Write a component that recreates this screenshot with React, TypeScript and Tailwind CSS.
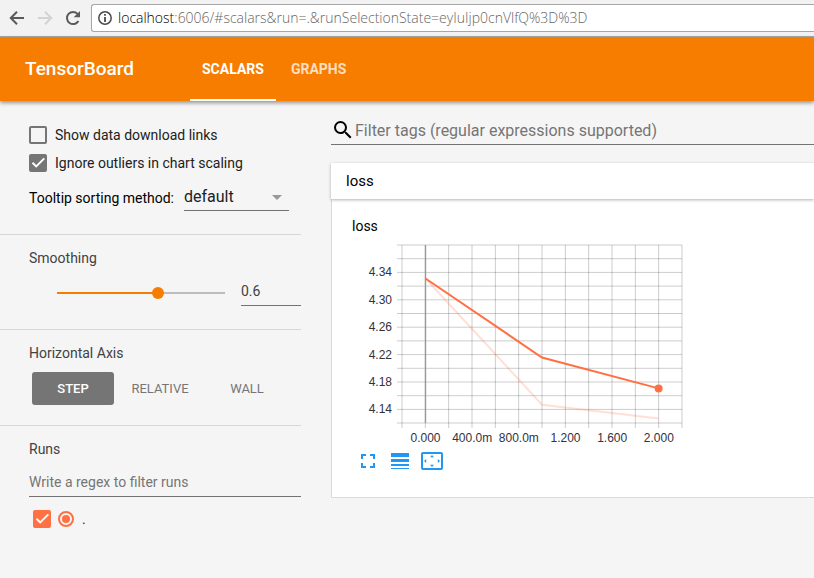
import { useState } from "react";
import type { ReactNode } from "react";

function CheckBox({
  id,
  checked,
  onChange,
  label,
  accent = false,
}: {
  id: string;
  checked: boolean;
  onChange: (value: boolean) => void;
  label?: string;
  accent?: boolean;
}) {
  return (
    <span className="grid shrink-0">
      <input
        id={id}
        type="checkbox"
        aria-label={label}
        checked={checked}
        onChange={(e) => onChange(e.target.checked)}
        className={
          accent
            ? "col-start-1 row-start-1 size-[18px] appearance-none rounded-[2px] border-2 border-[#ff7043] checked:bg-[#ff7043]"
            : "col-start-1 row-start-1 size-[18px] appearance-none rounded-[2px] border-2 border-[#757575] checked:bg-[#757575]"
        }
      />
      {checked && (
        <svg
          viewBox="0 0 18 18"
          className="pointer-events-none col-start-1 row-start-1 size-[18px]"
          fill="none"
          stroke="#fff"
          strokeWidth="2"
          aria-hidden="true"
        >
          <path d="M3.5 8.8 7.2 12.4 15.3 4.4" />
        </svg>
      )}
    </span>
  );
}

function Section({ children, className }: { children: ReactNode; className: string }) {
  return (
    <section className={`border-b border-[#d6d6d6] pl-[29px] last:border-b-0 ${className}`}>
      {children}
    </section>
  );
}

function BrowserBar() {
  return (
    <div className="flex h-[37px] items-center border-b border-[#aaa] bg-[#f2f2f2] pl-[9px]">
      <button aria-label="Back" className="mr-3 text-[#5a5a5a]">
        <svg viewBox="0 0 16 16" className="size-4" fill="none" stroke="currentColor" strokeWidth="2">
          <path d="M15 8H2.5M8 1.8 1.8 8 8 14.2" />
        </svg>
      </button>
      <button aria-label="Forward" className="mr-3 text-[#d3d3d3]">
        <svg viewBox="0 0 16 16" className="size-4" fill="none" stroke="currentColor" strokeWidth="2">
          <path d="M1 8h12.5M8 1.8 14.2 8 8 14.2" />
        </svg>
      </button>
      <button aria-label="Reload" className="mr-[10px] text-[#5a5a5a]">
        <svg viewBox="0 0 16 16" className="size-4" fill="none">
          <path d="M13.4 11A6.1 6.1 0 1 1 12.6 3.9" stroke="currentColor" strokeWidth="2" />
          <path d="M15 1v6.3H8.7z" fill="currentColor" />
        </svg>
      </button>
      <div className="flex h-7 min-w-0 flex-1 items-center rounded-l-[3px] border border-r-0 border-[#a6a6a6] bg-white pl-[6px]">
        <svg viewBox="0 0 14 14" className="size-[14px] shrink-0" fill="none" aria-hidden="true">
          <circle cx="7" cy="7" r="6.2" stroke="#4a4a4a" strokeWidth="1.5" />
          <path d="M7 3v1.8M7 6v5" stroke="#4a4a4a" strokeWidth="1.8" />
        </svg>
        <p className="ml-[6px] font-['Open_Sans',sans-serif] text-sm font-light whitespace-nowrap text-[#666]">
          <span className="text-black">localhost</span>
          :6006/#scalars&amp;run=.&amp;runSelectionState=eyIuIjp0cnVlfQ%3D%3D
        </p>
      </div>
    </div>
  );
}

function Header() {
  return (
    <header className="relative flex h-16 items-stretch bg-[#f77d00] pl-[25px] text-white shadow-[0_2px_4px_rgba(0,0,0,0.4)]">
      <h1 className="mr-14 self-center text-[19px] font-medium">TensorBoard</h1>
      <nav className="flex text-sm font-bold">
        <a href="#scalars" className="flex items-center border-b-2 border-white px-3 pt-[2px]">
          SCALARS
        </a>
        <a href="#graphs" className="ml-[3px] flex items-center px-3 text-white/75">
          GRAPHS
        </a>
      </nav>
    </header>
  );
}

const axes = ["STEP", "RELATIVE", "WALL"];

function Sidebar() {
  const [download, setDownload] = useState(false);
  const [outliers, setOutliers] = useState(true);
  const [axis, setAxis] = useState("STEP");
  const [run, setRun] = useState(true);
  return (
    <aside className="w-[301px] shrink-0 text-sm text-[#212121]">
      <Section className="pt-6 pb-[23px]">
        <div className="flex h-5 items-center gap-2">
          <CheckBox id="download" checked={download} onChange={setDownload} />
          <label htmlFor="download">Show data download links</label>
        </div>
        <div className="mt-2 flex h-5 items-center gap-2">
          <CheckBox id="outliers" checked={outliers} onChange={setOutliers} />
          <label htmlFor="outliers">Ignore outliers in chart scaling</label>
        </div>
        <div className="mt-[10px] flex h-7 items-center text-black">
          <label htmlFor="sorting" className="w-[155px] pt-[2px]">
            Tooltip sorting method:
          </label>
          <span className="grid w-[105px] items-center border-b border-[#737373] text-[#212121]">
            <select
              id="sorting"
              className="col-start-1 row-start-1 h-[27px] w-full appearance-none bg-transparent text-base"
            >
              <option>default</option>
              <option>ascending</option>
              <option>descending</option>
              <option>nearest</option>
            </select>
            <svg
              viewBox="0 0 10 5"
              className="pointer-events-none col-start-1 row-start-1 mt-[2px] mr-[7px] h-[5px] w-[10px] justify-self-end"
              aria-hidden="true"
            >
              <path d="M0 0h10L5 5z" fill="#999" />
            </svg>
          </span>
        </div>
      </Section>

      <Section className="pt-[13px] pb-[23px]">
        <label htmlFor="smoothing" className="block leading-5 text-[#424242]">
          Smoothing
        </label>
        <div className="mt-[10px] flex h-7 items-center pl-[22px]">
          <input
            id="smoothing"
            type="range"
            min="0"
            max="1"
            step="0.1"
            defaultValue="0.6"
            className="mt-[2px] h-4 w-[180px] appearance-none bg-transparent [&::-webkit-slider-runnable-track]:h-[2px] [&::-webkit-slider-runnable-track]:bg-[linear-gradient(to_right,transparent_6px,#f77d00_6px,#f77d00_107px,#bdbdbd_107px,#bdbdbd_174px,transparent_174px)] [&::-webkit-slider-thumb]:-mt-[5px] [&::-webkit-slider-thumb]:size-3 [&::-webkit-slider-thumb]:appearance-none [&::-webkit-slider-thumb]:rounded-full [&::-webkit-slider-thumb]:bg-[#f77d00]"
          />
          <input
            aria-label="Smoothing value"
            defaultValue="0.6"
            className="ml-[10px] h-7 w-[60px] border-b border-[#737373] bg-transparent pb-[2px] text-[#424242]"
          />
        </div>
      </Section>

      <Section className="pt-[13px] pb-5">
        <h2 className="leading-5 text-[#424242]">Horizontal Axis</h2>
        <div className="mt-[9px] ml-[3px] flex gap-[5px]">
          {axes.map((name) => (
            <button
              key={name}
              aria-pressed={axis === name}
              onClick={() => setAxis(name)}
              className={
                axis === name
                  ? "h-[33px] w-[82px] rounded-[3px] bg-[#757575] pt-[2px] text-[13px] font-medium text-white"
                  : "h-[33px] w-[82px] rounded-[3px] pt-[2px] text-[13px] text-[#757575]"
              }
            >
              {name}
            </button>
          ))}
        </div>
      </Section>

      <Section className="pt-[13px]">
        <label htmlFor="runs" className="block leading-5 text-[#424242]">
          Runs
        </label>
        <input
          id="runs"
          placeholder="Write a regex to filter runs"
          className="mt-[9px] h-[29px] w-full border-b border-[#737373] bg-transparent placeholder:text-[#757575]"
        />
        <div className="mt-[12px] flex h-5 items-center pl-1">
          <CheckBox id="run-visible" label="Show run" checked={run} onChange={setRun} accent />
          <span className="ml-[7px] grid size-4 place-items-center">
            <input
              id="run-only"
              type="radio"
              name="run"
              defaultChecked
              className="peer col-start-1 row-start-1 size-4 appearance-none rounded-full border-2 border-[#ff7043]"
            />
            <span className="pointer-events-none col-start-1 row-start-1 hidden size-2 rounded-full bg-[#ff7043] peer-checked:block" />
          </span>
          <label htmlFor="run-only" className="ml-2">
            .
          </label>
        </div>
      </Section>
    </aside>
  );
}

// Pixel geometry of the plot area inside the drawing.
const left = 51;
const right = 331;
const top = 9;
const bottom = 187;
const columns = Array.from({ length: 13 }, (_, i) => left + (i * (right - left)) / 12);
const rows = [top, ...Array.from({ length: 12 }, (_, i) => 22.7 + i * 13.7), bottom];
const yLabels = ["4.34", "4.30", "4.26", "4.22", "4.18", "4.14"];
const xLabels = ["0.000", "400.0m", "800.0m", "1.200", "1.600", "2.000"];

function LossChart() {
  return (
    <svg
      width="350"
      height="210"
      viewBox="0 0 350 210"
      role="img"
      aria-label="loss by step"
      className="block font-['Liberation_Sans',Arial,sans-serif] text-xs"
    >
      <g stroke="#000" strokeOpacity="0.2">
        {columns.map((x) => (
          <path key={x} d={`M${x} ${top}V${bottom + 5}`} />
        ))}
        {rows.map((y) => (
          <path key={y} d={`M${left - 5} ${y}H${right}`} />
        ))}
      </g>
      <path d="M74.5 9V187" stroke="#999" strokeWidth="1.4" />
      <g fill="#32313f">
        {yLabels.map((t, i) => (
          <text key={t} x="41" y={40.4 + i * 27.4} textAnchor="end">
            {t}
          </text>
        ))}
        {xLabels.map((t, i) => (
          <text key={t} x={74.5 + i * 46.67} y="206" textAnchor="middle">
            {t}
          </text>
        ))}
      </g>
      <g fill="none" stroke="#ff7043" strokeWidth="2">
        <path d="M74.5 42.5 191 168.7 307.6 182.4" strokeOpacity="0.22" />
        <path d="M74.5 42.5 191 121.5 307.6 152.4" />
      </g>
      <circle cx="307.6" cy="152.4" r="4" fill="#ff7043" />
    </svg>
  );
}

function Main() {
  return (
    <main className="ml-[30px] min-w-0 flex-1 pt-[15px]">
      <div className="flex h-[29px] items-center border-b border-[#737373]">
        <svg viewBox="0 0 18 18" className="ml-[3px] size-[18px] shrink-0" aria-hidden="true">
          <path
            d="M12.5 11h-.79l-.28-.27A6.471 6.471 0 0 0 13 6.5 6.5 6.5 0 1 0 6.500 13c1.610 0 3.090-.59 4.230-1.570l.27.28v.79l5 4.990L17.490 16l-4.990-5zm-6 0C4.010 11 2 8.990 2 6.500S4.010 2 6.500 2 11 4.010 11 6.500 8.990 11 6.500 11z"
            fill="#000"
          />
        </svg>
        <input
          aria-label="Filter tags"
          placeholder="Filter tags (regular expressions supported)"
          className="ml-[3px] h-7 min-w-0 flex-1 bg-transparent text-base placeholder:text-[#757575]"
        />
      </div>
      <section className="mt-[18px] text-black">
        <h2 className="relative bg-white pl-[15px] text-[15px] leading-9 shadow-[0_1px_3px_rgba(0,0,0,0.3)]">
          loss
        </h2>
        <div className="border-b border-l border-[#dadada] bg-white pb-[27px]">
          <h3 className="pt-[17px] pl-5 text-sm leading-5">loss</h3>
          <div className="pl-[19px]">
            <LossChart />
            <div className="mt-[6px] flex items-center gap-[10px] pl-[6px]">
              <button aria-label="Expand chart" className="flex w-[22px] justify-center">
                <svg width="14" height="14" viewBox="0 0 14 14" fill="none" stroke="#2196f3" strokeWidth="2">
                  <path d="M1 5V1h4M9 1h4v4M13 9v4H9M5 13H1V9" />
                </svg>
              </button>
              <button aria-label="Toggle log scale" className="flex w-[22px] justify-center">
                <svg width="18" height="16" viewBox="0 0 18 16" fill="#2196f3">
                  <path d="M0 0h18v4H0zM0 6h18v3H0zM0 11h18v2H0zM0 15h18v1H0z" />
                </svg>
              </button>
              <button aria-label="Fit domain to data">
                <svg width="22" height="18" viewBox="0 0 22 18" fill="none">
                  <rect x="1" y="1" width="20" height="16" rx="1" stroke="#2196f3" strokeWidth="2" />
                  <path
                    d="M11 3 13 5.200H9zM11 15l2-2.200H9zM3 9l2.200-2v4zM19 9l-2.200-2v4z"
                    fill="#2196f3"
                  />
                </svg>
              </button>
            </div>
          </div>
        </div>
      </section>
    </main>
  );
}

export default function App() {
  return (
    <div className="min-h-screen bg-[#f5f5f5] font-[Roboto,sans-serif]">
      <BrowserBar />
      <Header />
      <div className="flex">
        <Sidebar />
        <Main />
      </div>
    </div>
  );
}
